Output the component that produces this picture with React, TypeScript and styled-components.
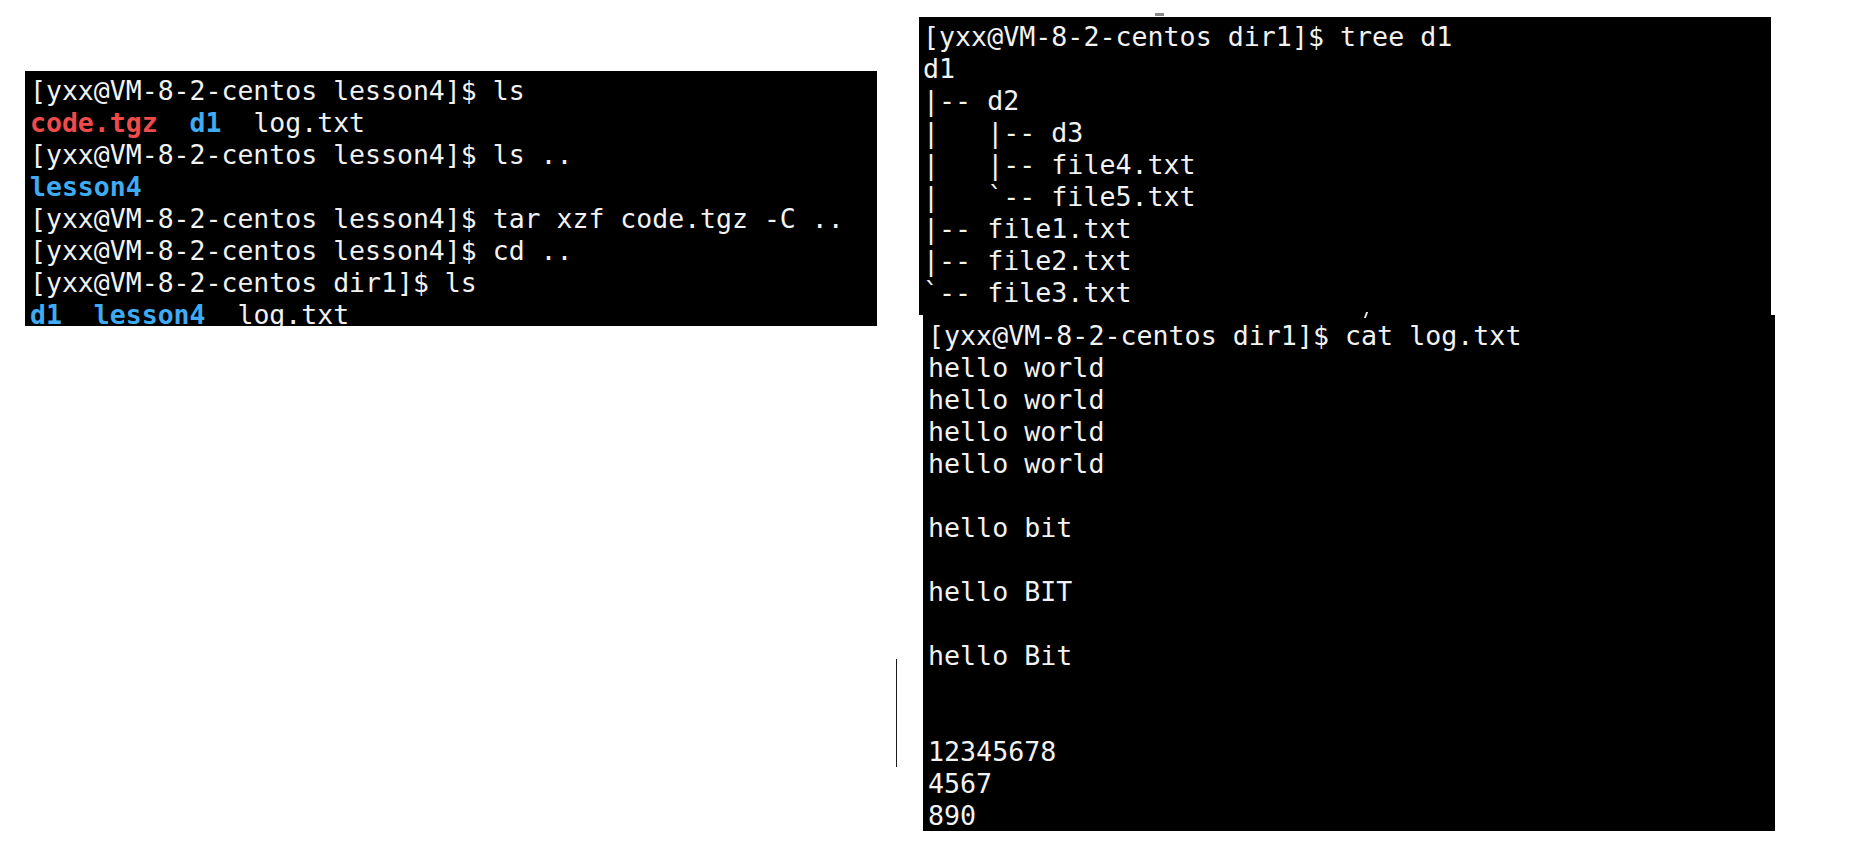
import React from "react";
import styled, { createGlobalStyle } from "styled-components";

const Global = createGlobalStyle`
  html, body { margin: 0; padding: 0; background: #ffffff; }
  body { width: 1852px; height: 850px; overflow: hidden; }
`;

const Page = styled.div`
  display: flex;
  align-items: flex-start;
  width: 1852px;
  height: 850px;
  background: #ffffff;
`;

const LeftColumn = styled.div`
  padding: 71px 0 0 25px;
`;

const Gutter = styled.div`
  width: 42px;
  display: flex;
  padding-top: 659px;
  padding-left: 19px;
  box-sizing: border-box;
`;

const Rule = styled.div`
  width: 1px;
  height: 108px;
  background: #1a1a1a;
`;

const RightColumn = styled.div`
  display: flex;
  flex-direction: column;
  padding-top: 17px;
`;

const Terminal = styled.div<{ $w: number; $h: number; $pt: number; $pl: number; $ml?: number; $fs?: number }>`
  position: relative;
  width: ${(p) => p.$w}px;
  height: ${(p) => p.$h}px;
  margin-left: ${(p) => p.$ml ?? 0}px;
  padding: ${(p) => p.$pt}px 0 0 ${(p) => p.$pl}px;
  box-sizing: border-box;
  background: #000000;
  color: #f2f2f2;
  font-family: "DejaVu Sans Mono", "Liberation Mono", monospace;
  font-size: ${(p) => p.$fs ?? 26.5}px;
  overflow: hidden;
`;

const TopTerminal = styled(Terminal)`
  overflow: visible;
  z-index: 1;
  &::before {
    content: "";
    position: absolute;
    left: 236px;
    top: -4px;
    width: 9px;
    height: 3px;
    background: #8a8a8a;
  }
  &::after {
    content: "";
    position: absolute;
    left: 446px;
    bottom: -3px;
    width: 2px;
    height: 6px;
    background: #e8e8e8;
    transform: skewX(-20deg);
  }
`;

const Line = styled.div`
  height: 32px;
  line-height: 32px;
  white-space: pre;
`;

const Colored = styled.span<{ $c: string }>`
  color: ${(p) => p.$c};
  font-weight: bold;
`;

const RED = "#f04b4b";
const BLUE = "#3eabf2";

const P1 = "[yxx@VM-8-2-centos lesson4]$ ";
const P2 = "[yxx@VM-8-2-centos dir1]$ ";

const treeLines = [
  "d1",
  "|-- d2",
  "|   |-- d3",
  "|   |-- file4.txt",
  "|   `-- file5.txt",
  "|-- file1.txt",
  "|-- file2.txt",
  "`-- file3.txt",
];

const catLines = [
  "hello world",
  "hello world",
  "hello world",
  "hello world",
  "",
  "hello bit",
  "",
  "hello BIT",
  "",
  "hello Bit",
  "",
  "",
  "12345678",
  "4567",
  "890",
];

export default function App() {
  return (
    <>
      <Global />
      <Page>
        <LeftColumn>
          <Terminal $w={852} $h={255} $pt={4} $pl={5}>
            <Line>{P1}ls</Line>
            <Line>
              <Colored $c={RED}>code.tgz</Colored>
              {"  "}
              <Colored $c={BLUE}>d1</Colored>
              {"  log.txt"}
            </Line>
            <Line>{P1}ls ..</Line>
            <Line>
              <Colored $c={BLUE}>lesson4</Colored>
            </Line>
            <Line>{P1}tar xzf code.tgz -C ..</Line>
            <Line>{P1}cd ..</Line>
            <Line>{P2}ls</Line>
            <Line>
              <Colored $c={BLUE}>d1</Colored>
              {"  "}
              <Colored $c={BLUE}>lesson4</Colored>
              {"  log.txt"}
            </Line>
          </Terminal>
        </LeftColumn>
        <Gutter>
          <Rule />
        </Gutter>
        <RightColumn>
          <TopTerminal $w={852} $h={298} $pt={4} $pl={4} $fs={26.65}>
            <Line>{P2}tree d1</Line>
            {treeLines.map((t, i) => (
              <Line key={i}>{t}</Line>
            ))}
          </TopTerminal>
          <Terminal $w={852} $h={516} $pt={5} $pl={5} $ml={4} $fs={26.65}>
            <Line>{P2}cat log.txt</Line>
            {catLines.map((t, i) => (
              <Line key={i}>{t}</Line>
            ))}
          </Terminal>
        </RightColumn>
      </Page>
    </>
  );
}
